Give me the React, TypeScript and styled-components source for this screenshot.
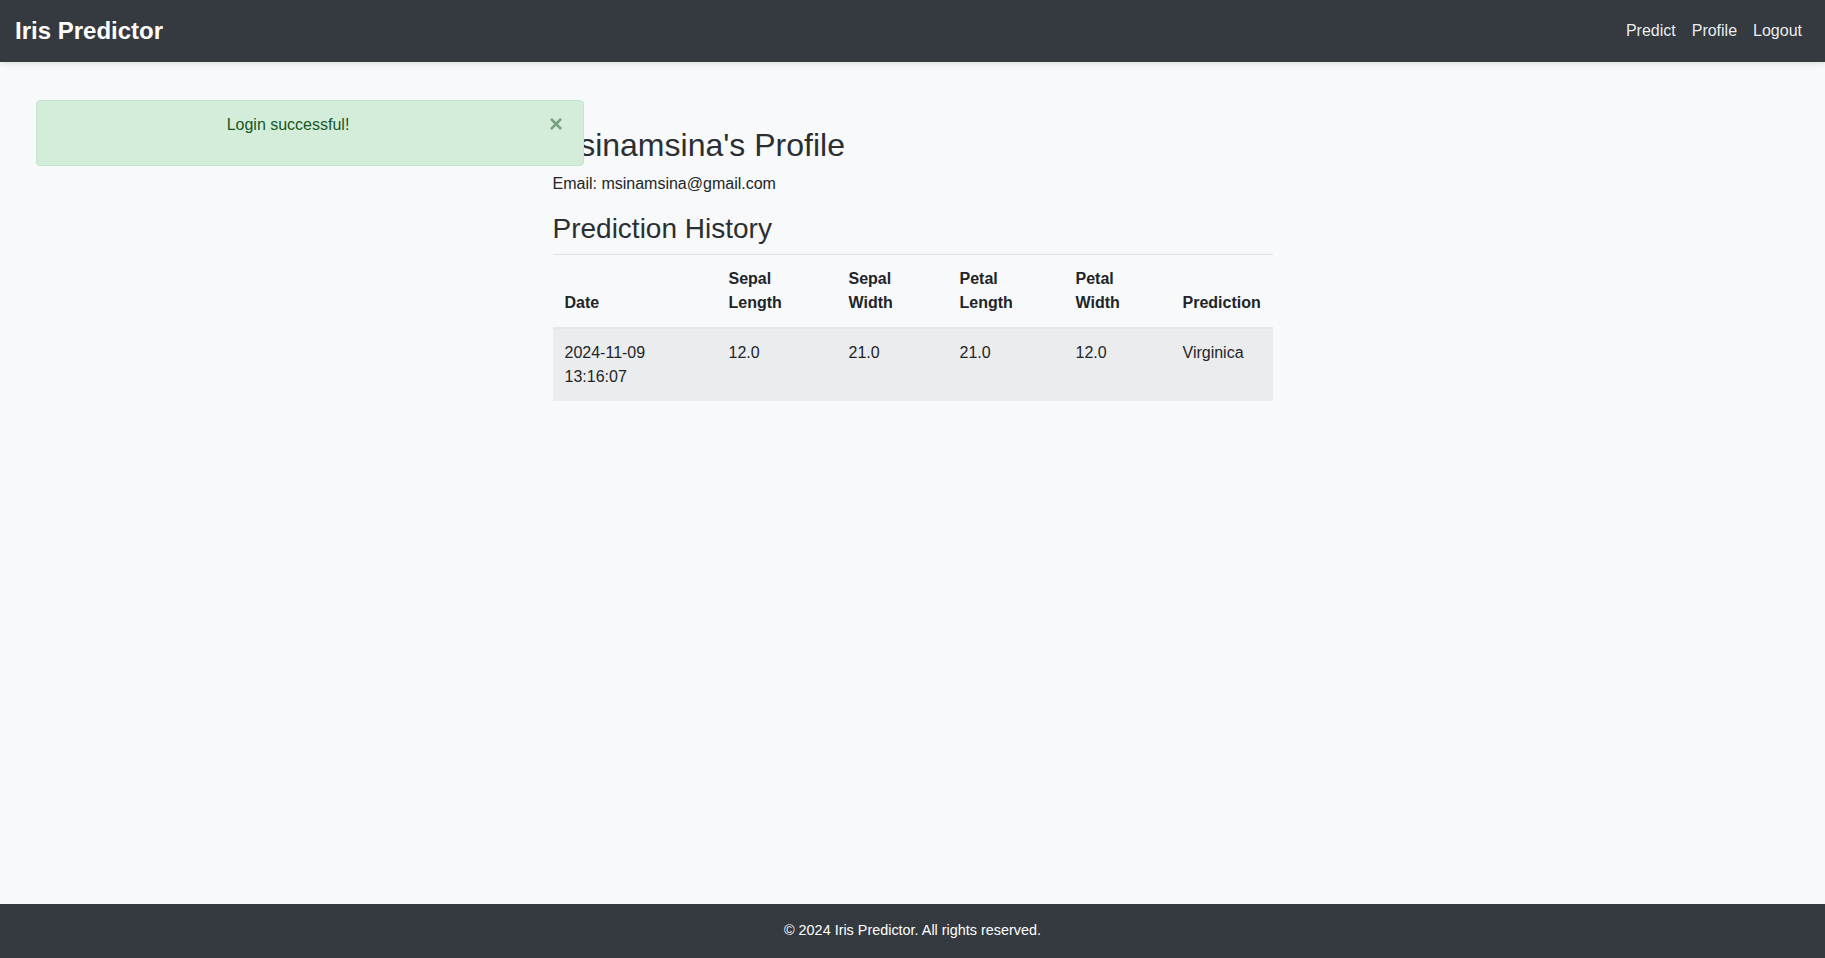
import React from "react";
import styled, { createGlobalStyle } from "styled-components";

const GlobalStyle = createGlobalStyle`
  * {
    box-sizing: border-box;
  }
  body {
    margin: 0;
    background: #f8f9fa;
    color: #212529;
    font-family: "Liberation Sans", Arial, sans-serif;
    font-size: 16px;
    line-height: 1.5;
  }
`;

const Page = styled.div`
  min-height: 100vh;
  display: flex;
  flex-direction: column;
`;

const NavBar = styled.nav`
  height: 62px;
  background: #343a40;
  display: flex;
  align-items: center;
  justify-content: space-between;
  padding: 0 15px 0 15px;
  box-shadow: 0 2px 5px rgba(0, 0, 0, 0.1);
`;

const Brand = styled.a`
  color: #fff;
  font-size: 24px;
  font-weight: 700;
  text-decoration: none;
  line-height: 1.2;
`;

const NavLinks = styled.div`
  display: flex;
`;

const NavLink = styled.a`
  color: rgba(255, 255, 255, 0.93);
  text-decoration: none;
  padding: 0 8px;
  font-size: 16px;
`;

const Main = styled.main`
  flex: 1;
  padding-top: 64px;
`;

const Content = styled.div`
  width: 720px;
  margin: 0 auto;
`;

const Title = styled.h2`
  margin: 0 0 8px;
  font-size: 32px;
  font-weight: 400;
  line-height: 1.2;
  color: #2b2f33;
`;

const Email = styled.p`
  margin: 0 0 16px;
`;

const SubTitle = styled.h3`
  margin: 0 0 8px;
  font-size: 28px;
  font-weight: 400;
  line-height: 1.2;
  color: #2b2f33;
`;

const Table = styled.table`
  width: 100%;
  border-collapse: collapse;
  table-layout: fixed;
`;

const HeadCell = styled.th<{ $w: number }>`
  width: ${(p) => p.$w}px;
  text-align: left;
  vertical-align: bottom;
  padding: 12px;
  font-weight: 700;
  white-space: normal;
  border-top: 1px solid #dee2e6;
  border-bottom: 2px solid #e4e7ea;
`;

const Row = styled.tr`
  background: rgba(0, 0, 0, 0.05);
`;

const Cell = styled.td`
  padding: 12px;
  vertical-align: top;
`;

const Alert = styled.div`
  position: fixed;
  top: 100px;
  left: 36px;
  width: 548px;
  height: 66px;
  padding: 12px 64px 12px 20px;
  background: #d4edda;
  border: 1px solid #c3e6cb;
  border-radius: 4px;
  color: #155724;
  text-align: center;
`;

const CloseButton = styled.button`
  position: absolute;
  top: -1px;
  right: 0;
  padding: 12px 20px;
  background: none;
  border: 0;
  color: #155724;
  opacity: 0.5;
  font-family: "Liberation Sans", Arial, sans-serif;
  font-size: 24px;
  font-weight: 700;
  line-height: 1;
  cursor: pointer;
`;

const Footer = styled.footer`
  background: #343a40;
  color: #fff;
  text-align: center;
  padding: 16px;
  font-size: 14.4px;
`;

const columns = [
  { label: "Date", w: 164 },
  { label: "Sepal Length", w: 120 },
  { label: "Sepal Width", w: 111 },
  { label: "Petal Length", w: 116 },
  { label: "Petal Width", w: 107 },
  { label: "Prediction", w: 102 },
];

const history = [
  {
    date: "2024-11-09 13:16:07",
    sl: "12.0",
    sw: "21.0",
    pl: "21.0",
    pw: "12.0",
    prediction: "Virginica",
  },
];

export default function App() {
  return (
    <Page>
      <GlobalStyle />
      <NavBar>
        <Brand href="#">Iris Predictor</Brand>
        <NavLinks>
          <NavLink href="#">Predict</NavLink>
          <NavLink href="#">Profile</NavLink>
          <NavLink href="#">Logout</NavLink>
        </NavLinks>
      </NavBar>
      <Main>
        <Content>
          <Title>msinamsina's Profile</Title>
          <Email>Email: msinamsina@gmail.com</Email>
          <SubTitle>Prediction History</SubTitle>
          <Table>
            <thead>
              <tr>
                {columns.map((c) => (
                  <HeadCell key={c.label} $w={c.w}>
                    {c.label}
                  </HeadCell>
                ))}
              </tr>
            </thead>
            <tbody>
              {history.map((h) => (
                <Row key={h.date}>
                  <Cell>{h.date}</Cell>
                  <Cell>{h.sl}</Cell>
                  <Cell>{h.sw}</Cell>
                  <Cell>{h.pl}</Cell>
                  <Cell>{h.pw}</Cell>
                  <Cell>{h.prediction}</Cell>
                </Row>
              ))}
            </tbody>
          </Table>
        </Content>
      </Main>
      <Alert>
        Login successful!
        <CloseButton aria-label="Close">×</CloseButton>
      </Alert>
      <Footer>© 2024 Iris Predictor. All rights reserved.</Footer>
    </Page>
  );
}
